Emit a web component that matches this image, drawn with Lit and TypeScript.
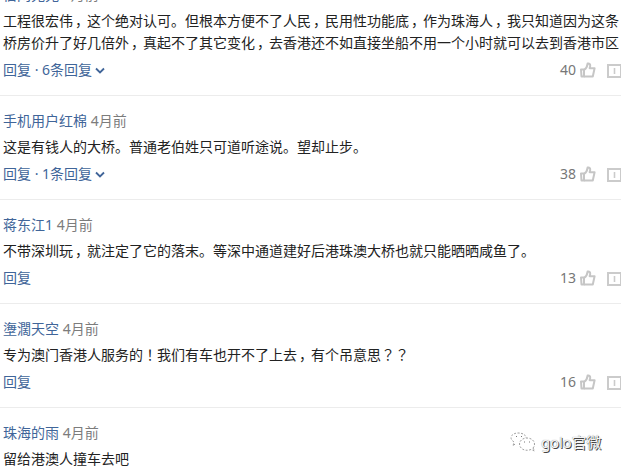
import { html, css, svg, LitElement, nothing } from "lit";
import { property, customElement } from "lit/decorators.js";

interface CommentData {
    user: string;
    time: string;
    lines: string[];
    replies?: number;
    likes?: string;
}

const COMMENTS: CommentData[] = [
    {
        user: "伯网苑苑",
        time: "4月前",
        lines: [
            "工程很宏伟，这个绝对认可。但根本方便不了人民，民用性功能底，作为珠海人，我只知道因为这条",
            "桥房价升了好几倍外，真起不了其它变化，去香港还不如直接坐船不用一个小时就可以去到香港市区",
        ],
        replies: 6,
        likes: "40",
    },
    { user: "手机用户红棉", time: "4月前", lines: ["这是有钱人的大桥。普通老伯姓只可道听途说。望却止步。"], replies: 1, likes: "38" },
    { user: "蒋东江1", time: "4月前", lines: ["不带深圳玩，就注定了它的落末。等深中通道建好后港珠澳大桥也就只能晒晒咸鱼了。"], likes: "13" },
    { user: "塰濶天空", time: "4月前", lines: ["专为澳门香港人服务的！我们有车也开不了上去，有个吊意思？？"], likes: "16" },
    { user: "珠海的雨", time: "4月前", lines: ["留给港澳人撞车去吧"] },
];

const chevron = svg`<path d="M1 1.5 L5 5.5 L9 1.5" fill="none" stroke="currentColor" stroke-width="1.8" />`;

@customElement("comment-item")
class CommentItem extends LitElement {
    @property({ type: Object })
    comment!: CommentData;

    static styles = css`
        :host {
            display: block;
            height: 103px;
            border-bottom: 1px solid #ececec;
            white-space: nowrap;
        }

        .meta {
            padding-top: 14px;
            height: 22px;
            line-height: 22px;
            color: #7c7c7c;
        }

        .user,
        .reply {
            color: #406599;
        }

        .text {
            margin-top: 4px;
            line-height: 22px;
            color: #222;
        }

        /* Commas sit a little further into their em box */
        .comma {
            padding-left: 2px;
            margin-right: -2px;
        }

        /* The Japanese face centres these marks */
        .mark {
            font-family: "Noto Sans CJK JP", sans-serif;
            line-height: 1;
        }

        .footer {
            display: flex;
            align-items: center;
            justify-content: space-between;
            height: 22px;
            margin-top: 5px;
            line-height: 22px;
        }

        .chevron {
            width: 10px;
            height: 7px;
            margin-left: 3px;
            vertical-align: 1px;
        }

        .actions {
            display: flex;
            align-items: center;
            color: #777;
        }

        .like {
            width: 16px;
            height: 16px;
            margin-left: 4px;
            margin-top: -1px;
        }

        .report {
            width: 14px;
            height: 14px;
            margin-left: 11px;
            margin-top: 2px;
        }
    `;

    renderLine(line: string) {
        return line.split(/([，！？])/).map((part) => {
            if (part === "，") return html`<span class="comma">${part}</span>`;
            if (part === "！" || part === "？") return html`<span class="mark" lang="ja">${part}</span>`;
            return part;
        });
    }

    render() {
        const { user, time, lines, replies, likes } = this.comment;
        return html`
            <div class="meta"><span class="user">${user}</span> ${time}</div>
            <div class="text">${lines.map((line) => html`<div>${this.renderLine(line)}</div>`)}</div>
            ${likes ? this.renderFooter(likes, replies) : nothing}
        `;
    }

    renderFooter(likes: string, replies?: number) {
        return html`
            <div class="footer">
                <span class="reply"
                    >回复${replies
                        ? html` · ${replies}条回复<svg class="chevron" viewBox="0 0 10 7">${chevron}</svg>`
                        : nothing}</span
                >
                <span class="actions">
                    ${likes}
                    <svg class="like" viewBox="0 0 16 16" fill="none" stroke="#c6c6c6" stroke-width="2" stroke-linejoin="round">
                        <path d="M1 7.5 H4 V14.5 H1.5 Z" />
                        <path d="M4 8 C6 6.5 7.4 4.5 7.6 1.6 C10.4 1 10.8 3.4 9.6 6.2 H14.6 L12.8 14.5 H4" />
                    </svg>
                    <svg class="report" viewBox="0 0 14 14" fill="none" stroke="#cbcbcb" stroke-width="2">
                        <rect x="1" y="1" width="13" height="12" />
                        <path d="M7.5 4 V10" stroke-width="1.6" />
                    </svg>
                </span>
            </div>
        `;
    }
}

@customElement("app-root")
class AppRoot extends LitElement {
    static styles = css`
        :host {
            display: block;
            position: relative;
            box-sizing: border-box;
            width: 621px;
            height: 470px;
            overflow: hidden;
            background: #fff;
            font-family: "Noto Sans", "Noto Sans CJK SC", sans-serif;
            font-size: 14px;
        }

        .list {
            display: flex;
            flex-direction: column;
            margin-top: -30px;
        }

        comment-item {
            padding-left: 3px;
        }

        comment-item:first-child {
            height: 125px;
        }

        .watermark {
            position: absolute;
            left: 509px;
            top: 431px;
            display: flex;
            align-items: center;
            gap: 5px;
            font-size: 15px;
            letter-spacing: -0.2px;
            line-height: 22px;
            color: #f4f4f4;
            text-shadow: 1px 1px 0 #444, 0 0 1px #888;
        }

        .watermark svg {
            width: 27px;
            height: 22px;
        }
    `;

    render() {
        return html`
            <div class="list">${COMMENTS.map((c) => html`<comment-item .comment=${c}></comment-item>`)}</div>
            <div class="watermark">
                <svg viewBox="0 0 27 22" fill="none" stroke="#888" stroke-width="0.8" stroke-dasharray="2 1.5">
                    <path d="M6 13 L4 15 L5 11 C-1 7 3 2 9 2 C14 2 17 4 17 7" />
                    <path d="M24 17 L25.5 20 L22 18.5 C15 21 10.5 17 10.5 13 C11 5 25 5 25.5 13 C25.5 15 25 16 24 17" />
                    <path d="M7 5.5 h1 M12 5.5 h1 M15 11 h1 M20 11 h1" stroke="#555" />
                </svg>
                <span>golo官微</span>
            </div>
        `;
    }
}

export default AppRoot;
